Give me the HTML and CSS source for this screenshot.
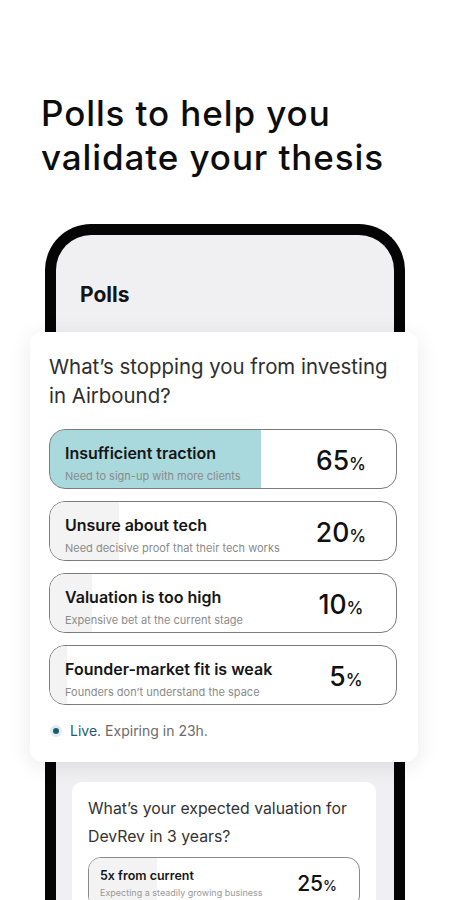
FILE: index.html
```html
<!DOCTYPE html>
<html lang="en">
<head>
<meta charset="utf-8">
<title>Polls</title>
<link rel="stylesheet" href="styles.css">
</head>
<body>
<main class="screen">
  <h1 class="headline">Polls to help you<br>validate your thesis</h1>

  <section class="phone">
    <div class="phone-header">Polls</div>

    <div class="poll-card">
      <p class="question">What’s stopping you from investing in Airbound?</p>
      <ul class="options">
        <li class="option option-top">
          <span class="fill fill-top" style="width:61%"></span>
          <span class="opt-text">
            <span class="opt-title">Insufficient traction</span>
            <span class="opt-sub">Need to sign-up with more clients</span>
          </span>
          <span class="pct">65<small>%</small></span>
        </li>
        <li class="option">
          <span class="fill" style="width:20%"></span>
          <span class="opt-text">
            <span class="opt-title">Unsure about tech</span>
            <span class="opt-sub">Need decisive proof that their tech works</span>
          </span>
          <span class="pct">20<small>%</small></span>
        </li>
        <li class="option">
          <span class="fill" style="width:12%"></span>
          <span class="opt-text">
            <span class="opt-title">Valuation is too high</span>
            <span class="opt-sub">Expensive bet at the current stage</span>
          </span>
          <span class="pct">10<small>%</small></span>
        </li>
        <li class="option">
          <span class="fill" style="width:5%"></span>
          <span class="opt-text">
            <span class="opt-title">Founder-market fit is weak</span>
            <span class="opt-sub">Founders don’t understand the space</span>
          </span>
          <span class="pct pct-narrow">5<small>%</small></span>
        </li>
      </ul>
      <p class="live"><span class="dot"></span><span class="live-label">Live.</span> Expiring in 23h.</p>
    </div>

    <div class="poll-card-small">
      <p class="question-small">What’s your expected valuation for DevRev in 3 years?</p>
      <div class="option-small">
        <span class="fill" style="width:25%"></span>
        <span class="opt-text-small">
          <span class="opt-title-small">5x from current</span>
          <span class="opt-sub-small">Expecting a steadily growing business</span>
        </span>
        <span class="pct-small">25<small>%</small></span>
      </div>
    </div>
  </section>
</main>
</body>
</html>
```

FILE: styles.css
```css
* { box-sizing: border-box; }

html, body {
  margin: 0;
  padding: 0;
  height: 900px;
  overflow: hidden;
  background: #ffffff;
}

body {
  font-family: Inter, "Noto Sans", "Liberation Sans", sans-serif;
  color: #111;
}

.screen {
  display: flex;
  flex-direction: column;
}

.headline {
  margin: 91px 0 45px 41px;
  font-size: 35px;
  line-height: 44px;
  font-weight: 500;
  letter-spacing: 0.9px;
  color: #0d0d0d;
}

.phone {
  margin-left: 45px;
  width: 360px;
  height: 720px;
  border: 11px solid #050505;
  border-bottom: none;
  border-radius: 46px 46px 0 0;
  background: #f0f0f3;
}

.phone-header {
  height: 97px;
  padding: 48px 0 0 24px;
  font-size: 21px;
  line-height: 24px;
  font-weight: 700;
  color: #141414;
}

.poll-card {
  margin-left: -26px;
  width: 388px;
  background: #fff;
  border-radius: 12px;
  padding: 20px 21px 21px 19px;
  box-shadow: 0 4px 22px rgba(0, 0, 0, 0.09);
  position: relative;
}

.question {
  margin: 0 0 19px;
  font-size: 20.4px;
  line-height: 29px;
  font-weight: 400;
  color: #2e2e2e;
}

.options {
  list-style: none;
  margin: 0;
  padding: 0;
  display: flex;
  flex-direction: column;
  gap: 12px;
}

.option {
  position: relative;
  height: 60px;
  border: 1px solid #7c7c7c;
  border-radius: 16px;
  overflow: hidden;
  display: flex;
  align-items: center;
  padding: 0 25px 0 15px;
  background: #fff;
}

.option-top {
  box-shadow: inset 3px 0 0 #0a0a0a;
}

.fill {
  position: absolute;
  left: 0;
  top: 0;
  bottom: 0;
  background: #f3f3f4;
}

.fill-top {
  background: #a9d8dd;
}

.opt-text {
  position: relative;
  flex: 1;
  display: flex;
  flex-direction: column;
  gap: 6px;
  padding-top: 8px;
}

.opt-title {
  font-size: 16px;
  line-height: 19px;
  font-weight: 600;
  color: #161616;
}

.opt-sub {
  font-size: 11px;
  line-height: 14px;
  color: #8b8b8b;
}

.pct {
  position: relative;
  width: 60px;
  text-align: center;
  font-size: 26.5px;
  font-weight: 500;
  color: #111;
  padding-top: 2px;
}

.pct small {
  font-size: 17px;
  font-weight: 500;
}

.pct-narrow {
  padding-left: 10px;
}

.live {
  margin: 16px 0 0 4px;
  display: flex;
  align-items: center;
  font-size: 14px;
  line-height: 20px;
  color: #6b6b6b;
}

.dot {
  width: 6px;
  height: 6px;
  border-radius: 50%;
  background: #1d5b73;
  box-shadow: 0 0 0 3px rgba(29, 91, 115, 0.12);
  margin-right: 11px;
}

.live-label {
  color: #1d5b73;
  margin-right: 4px;
}

.poll-card-small {
  margin: 20px 0 0 16px;
  width: 304px;
  background: #fff;
  border-radius: 10px;
  padding: 13px 16px 16px 16px;
}

.question-small {
  margin: 0 0 6px;
  font-size: 15.8px;
  line-height: 28px;
  color: #333;
}

.option-small {
  position: relative;
  height: 52px;
  border: 1px solid #8a8a8a;
  border-radius: 13px;
  overflow: hidden;
  display: flex;
  align-items: center;
  padding: 0 22px 0 11px;
}

.opt-text-small {
  position: relative;
  flex: 1;
  display: flex;
  flex-direction: column;
  gap: 3px;
}

.opt-title-small {
  font-size: 12.5px;
  line-height: 16px;
  font-weight: 600;
  color: #161616;
}

.opt-sub-small {
  font-size: 9px;
  line-height: 12px;
  color: #999;
}

.pct-small {
  position: relative;
  font-size: 21px;
  font-weight: 500;
  color: #111;
}

.pct-small small {
  font-size: 14px;
}
```
